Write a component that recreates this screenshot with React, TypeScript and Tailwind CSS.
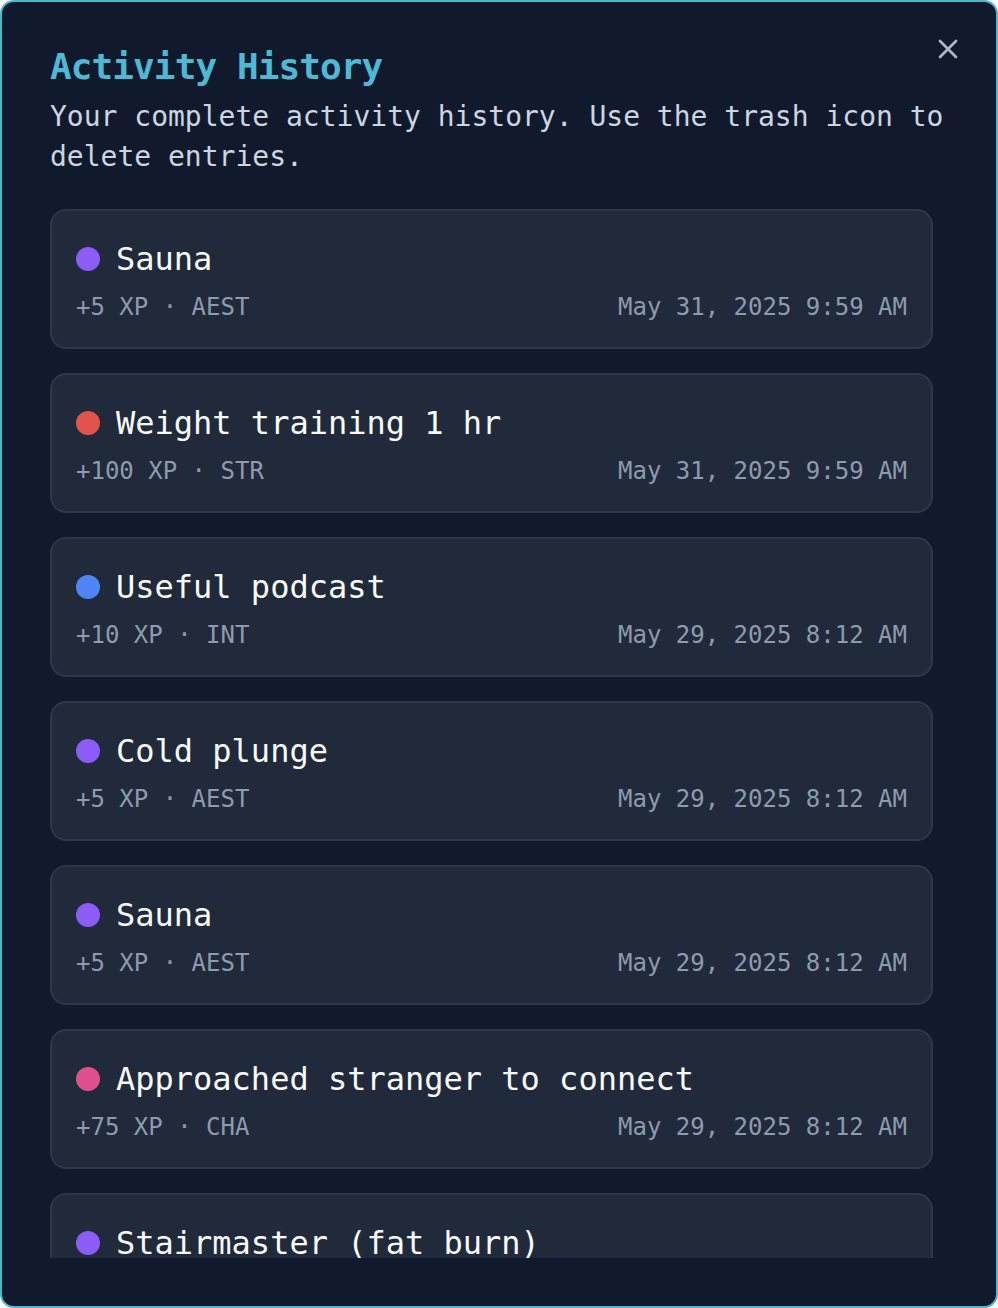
import React from 'react';
import { X } from 'lucide-react';

type Entry = {
  id: number;
  name: string;
  xp: number;
  stat: string;
  color: string;
  date: string;
};

const entries: Entry[] = [
  { id: 1, name: 'Sauna', xp: 5, stat: 'AEST', color: 'bg-[#8b5cf6]', date: 'May 31, 2025 9:59 AM' },
  { id: 2, name: 'Weight training 1 hr', xp: 100, stat: 'STR', color: 'bg-[#e2544b]', date: 'May 31, 2025 9:59 AM' },
  { id: 3, name: 'Useful podcast', xp: 10, stat: 'INT', color: 'bg-[#4f86f7]', date: 'May 29, 2025 8:12 AM' },
  { id: 4, name: 'Cold plunge', xp: 5, stat: 'AEST', color: 'bg-[#8b5cf6]', date: 'May 29, 2025 8:12 AM' },
  { id: 5, name: 'Sauna', xp: 5, stat: 'AEST', color: 'bg-[#8b5cf6]', date: 'May 29, 2025 8:12 AM' },
  { id: 6, name: 'Approached stranger to connect', xp: 75, stat: 'CHA', color: 'bg-[#e0508f]', date: 'May 29, 2025 8:12 AM' },
  { id: 7, name: 'Stairmaster (fat burn)', xp: 50, stat: 'STR', color: 'bg-[#8b5cf6]', date: 'May 29, 2025 8:12 AM' },
];

const App: React.FC = () => {
  return (
    <div className="h-[1308px] w-full bg-white font-['DejaVu_Sans_Mono','Liberation_Mono',monospace]">
      <div className="relative flex h-full flex-col gap-[32px] rounded-[14px] border-2 border-[#4cb6cf] bg-[#101a2c] px-[48px] pb-[48px] pt-[47px]">
        {/* Close */}
        <button className="absolute right-[32px] top-[31px] text-[#aeb6c2]">
          <X className="h-[32px] w-[32px]" strokeWidth={2} />
        </button>

        {/* Header */}
        <div className="flex flex-col gap-[12px]">
          <h2 className="text-[36px] font-bold leading-[36px] tracking-[-0.9px] text-[#4fb8d3]">
            Activity History
          </h2>
          <p className="text-[28px] leading-[40px] text-[#cdd5e0]">
            Your complete activity history. Use the trash icon to delete entries.
          </p>
        </div>

        {/* List */}
        <div className="min-h-0 flex-1 overflow-hidden pr-[15px]">
          <div className="flex flex-col gap-[24px]">
            {entries.map((entry) => (
              <div
                key={entry.id}
                className="rounded-[16px] border-2 border-[#2c374a] bg-[#202a3b] p-[24px]"
              >
                <div className="flex items-center gap-[16px]">
                  <span className={`h-[24px] w-[24px] shrink-0 rounded-full ${entry.color}`} />
                  <span className="text-[32px] leading-[48px] text-[#f8fafc]">{entry.name}</span>
                </div>
                <div className="mt-[8px] flex items-center justify-between text-[24px] leading-[32px] text-[#8f9bad]">
                  <span>+{entry.xp} XP · {entry.stat}</span>
                  <span>{entry.date}</span>
                </div>
              </div>
            ))}
          </div>
        </div>
      </div>
    </div>
  );
};

export default App;
